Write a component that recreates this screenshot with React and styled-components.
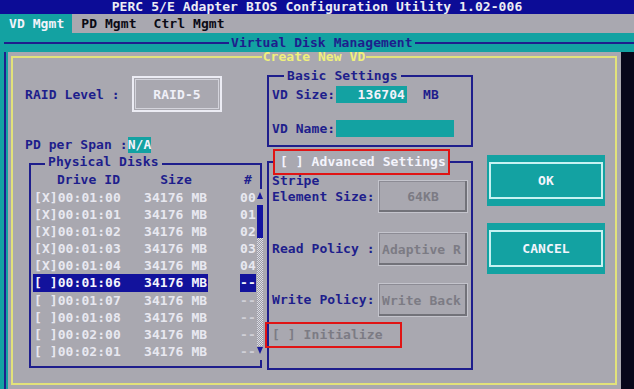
import styled, { createGlobalStyle } from "styled-components";

const GlobalStyle = createGlobalStyle`
  * {
    box-sizing: border-box;
  }
  html,
  body {
    margin: 0;
    padding: 0;
    background: #07071a;
  }
  body {
    font-family: "DejaVu Sans Mono", "Liberation Mono", monospace;
    font-weight: bold;
    font-size: 13px;
    letter-spacing: 0.07px;
  }
`;

const disks = [
  { mark: "X", id: "00:01:00", num: "00" },
  { mark: "X", id: "00:01:01", num: "01" },
  { mark: "X", id: "00:01:02", num: "02" },
  { mark: "X", id: "00:01:03", num: "03" },
  { mark: "X", id: "00:01:04", num: "04" },
  { mark: " ", id: "00:01:06", num: "--", selected: true },
  { mark: " ", id: "00:01:07", num: "--" },
  { mark: " ", id: "00:01:08", num: "--" },
  { mark: " ", id: "00:02:00", num: "--" },
  { mark: " ", id: "00:02:01", num: "--" },
];

function ScrollGlyph({ down }) {
  return (
    <svg width="6" height="7" viewBox="0 0 6 7">
      <path d={down ? "M0 0H6L3 7Z" : "M3 0L6 7H0Z"} fill="#1a1a9c" />
    </svg>
  );
}

function App() {
  return (
    <Screen>
      <GlobalStyle />
      <TitleBar>PERC 5/E Adapter BIOS Configuration Utility 1.02-006</TitleBar>
      <MenuBar>
        <Tab $active>VD Mgmt</Tab>
        <Tab>PD Mgmt</Tab>
        <Tab>Ctrl Mgmt</Tab>
      </MenuBar>

      <Workspace>
        <WindowHeader>
          <HeaderLine $width={225} />
          <WindowTitle>Virtual Disk Management</WindowTitle>
          <HeaderLine />
        </WindowHeader>

        <WindowBody>
          <Rail />
          <Dialog>
            <Frame>
              <FrameTitle>Create New VD</FrameTitle>
              <Columns>
                <LeftColumn>
                  <RaidRow>
                    <FieldLabel $width={107}>RAID Level :</FieldLabel>
                    <RaidBox>RAID-5</RaidBox>
                  </RaidRow>
                  <SpanRow>
                    PD per Span :<SpanValue>N/A</SpanValue>
                  </SpanRow>

                  <DiskGroup>
                    <GroupTitle $offset={12} $drop={4}>
                      Physical Disks
                    </GroupTitle>
                    <DiskHeader>
                      <span>Drive ID</span>
                      <span>Size</span>
                      <span />
                      <span>#</span>
                    </DiskHeader>
                    <DiskBody>
                      <DiskRows>
                        {disks.map((d) => (
                          <DiskRow key={d.id}>
                            <DiskCell $selected={d.selected} $pad={1}>
                              [{d.mark}]{d.id}
                            </DiskCell>
                            <DiskCell $selected={d.selected}>34176 MB</DiskCell>
                            <span />
                            <DiskCell $selected={d.selected} $muted={d.num === "--"}>
                              {d.num}
                            </DiskCell>
                          </DiskRow>
                        ))}
                      </DiskRows>
                      <ScrollBar>
                        <ScrollArrow>
                          <ScrollGlyph />
                        </ScrollArrow>
                        <ScrollThumb />
                        <ScrollTrack />
                        <ScrollArrow $down>
                          <ScrollGlyph down />
                        </ScrollArrow>
                      </ScrollBar>
                    </DiskBody>
                  </DiskGroup>
                </LeftColumn>

                <MiddleColumn>
                  <BasicGroup>
                    <GroupTitle $offset={12}>Basic Settings</GroupTitle>
                    <InputRow $gap={4}>
                      <FieldLabel $width={64}>VD Size:</FieldLabel>
                      <TextInput $width={71}>136704</TextInput>
                      <Unit>MB</Unit>
                    </InputRow>
                    <InputRow $gap={17}>
                      <FieldLabel $width={64}>VD Name:</FieldLabel>
                      <TextInput $width={118} />
                    </InputRow>
                  </BasicGroup>

                  <AdvancedGroup>
                    <AdvancedToggle>[ ] Advanced Settings</AdvancedToggle>
                    <SettingRow>
                      <SettingLabel>
                        <StripeLine>Stripe</StripeLine>
                        <ElementLine>Element Size:</ElementLine>
                      </SettingLabel>
                      <OptionBox $top={5} $height={33} $center>
                        64KB
                      </OptionBox>
                    </SettingRow>
                    <SettingRow $gap={19}>
                      <SettingLabel $line={34}>Read Policy :</SettingLabel>
                      <OptionBox $height={34}>Adaptive R</OptionBox>
                    </SettingRow>
                    <SettingRow $gap={17}>
                      <SettingLabel $line={34}>Write Policy:</SettingLabel>
                      <OptionBox $height={34}>Write Back</OptionBox>
                    </SettingRow>
                    <InitializeOption>[ ] Initialize</InitializeOption>
                  </AdvancedGroup>
                </MiddleColumn>

                <RightColumn>
                  <ActionButton $gap={93}>
                    <ButtonFace>OK</ButtonFace>
                  </ActionButton>
                  <ActionButton $gap={17}>
                    <ButtonFace>CANCEL</ButtonFace>
                  </ActionButton>
                </RightColumn>
              </Columns>
            </Frame>
          </Dialog>
          <Shadow />
        </WindowBody>
      </Workspace>
    </Screen>
  );
}

export default App;

const Screen = styled.div`
  width: 634px;
  height: 389px;
  display: flex;
  flex-direction: column;
  overflow: hidden;
  background: #07071a;
`;

const TitleBar = styled.div`
  flex: none;
  height: 14px;
  line-height: 14px;
  background: #0c0c96;
  color: #ececf4;
  text-align: center;
  white-space: pre;
`;

const MenuBar = styled.div`
  flex: none;
  height: 19px;
  display: flex;
  background: #a9a8b0;
`;

const Tab = styled.div`
  padding: 0 8px 0 9px;
  line-height: 19px;
  white-space: pre;
  color: ${(p) => (p.$active ? "#f2f2fa" : "#0a0a14")};
  background: ${(p) => (p.$active ? "#13a2a2" : "transparent")};
`;

const Workspace = styled.div`
  flex: 1;
  min-height: 0;
  display: flex;
  flex-direction: column;
  background: #13a2a2;
`;

const WindowHeader = styled.div`
  flex: none;
  height: 19px;
  display: flex;
  align-items: center;
  padding-left: 4px;
`;

const HeaderLine = styled.div`
  height: 2px;
  background: #1e1e8c;
  flex: ${(p) => (p.$width ? "none" : 1)};
  width: ${(p) => (p.$width ? `${p.$width}px` : "auto")};
`;

const WindowTitle = styled.div`
  padding: 0 2px;
  line-height: 19px;
  color: #1e1e8c;
  white-space: pre;
`;

const WindowBody = styled.div`
  flex: 1;
  min-height: 0;
  display: flex;
`;

const Rail = styled.div`
  flex: none;
  width: 4px;
  margin-left: 4px;
  border-left: 2px solid #1e1e8c;
`;

const Dialog = styled.div`
  flex: none;
  width: 613px;
  display: flex;
  padding: 0 4px 4px 3px;
  background: #a9a8b0;
`;

const Shadow = styled.div`
  flex: 1;
  background: #07071a;
`;

const Frame = styled.fieldset`
  flex: 1;
  min-width: 0;
  margin: 0;
  padding: 0;
  border: 2px solid #e2e27a;
`;

const FrameTitle = styled.legend`
  margin: 0 auto;
  padding: 0 1px;
  line-height: 10px;
  color: #f0f07c;
  white-space: pre;
`;

const Columns = styled.div`
  display: grid;
  grid-template-columns: 254px 206px 1fr;
  align-items: start;
`;

const LeftColumn = styled.div`
  display: flex;
  flex-direction: column;
  padding-left: 12px;
`;

const RaidRow = styled.div`
  margin-top: 14px;
  display: flex;
  align-items: center;
`;

const FieldLabel = styled.div`
  flex: none;
  width: ${(p) => p.$width}px;
  line-height: 17px;
  color: #1e1e8c;
  white-space: pre;
`;

const RaidBox = styled.div`
  width: 90px;
  height: 36px;
  display: flex;
  align-items: center;
  justify-content: center;
  border: 2px solid #ececf4;
  box-shadow: inset 0 0 0 1px #a9a8b0, inset 0 0 0 2px #d4d4dc;
  color: #f0f0f8;
`;

const SpanRow = styled.div`
  margin-top: 24px;
  line-height: 17px;
  color: #1e1e8c;
  white-space: pre;
`;

const SpanValue = styled.span`
  display: inline-block;
  line-height: 16px;
  background: #13a2a2;
  color: #f2f2fa;
`;

const DiskGroup = styled.fieldset`
  width: 233px;
  min-width: 0;
  margin: 3px 0 0 4px;
  padding: 0 0 6px 2px;
  border: 2px solid #1e1e8c;
`;

const GroupTitle = styled.legend`
  margin-left: ${(p) => p.$offset}px;
  padding: 0 3px ${(p) => p.$drop || 0}px;
  line-height: 12px;
  color: #1e1e8c;
  white-space: pre;
`;

const DiskHeader = styled.div`
  display: grid;
  grid-template-columns: 111px 64px 32px 16px;
  line-height: 16.5px;
  text-align: center;
  color: #1e1e8c;
`;

const DiskBody = styled.div`
  display: flex;
`;

const DiskRows = styled.div`
  flex: none;
  width: 224px;
`;

const DiskRow = styled.div`
  display: grid;
  grid-template-columns: 111px 64px 32px 16px;
  height: 17.2px;
  line-height: 17.2px;
  white-space: pre;
`;

const DiskCell = styled.span`
  padding-left: ${(p) => p.$pad || 0}px;
  color: ${(p) => (p.$selected ? "#f4f4fc" : p.$muted ? "#cfcfd7" : "#e8e8f0")};
  background: ${(p) => (p.$selected ? "#12129c" : "transparent")};
`;

const ScrollBar = styled.div`
  flex: none;
  width: 6px;
  margin-right: -3px;
  display: flex;
  flex-direction: column;
  background: #a9a8b0;
`;

const ScrollArrow = styled.div`
  flex: none;
  height: 14px;
  display: flex;
  justify-content: center;
  align-items: ${(p) => (p.$down ? "flex-start" : "center")};
  padding-top: ${(p) => (p.$down ? 1 : 0)}px;
`;

const ScrollThumb = styled.div`
  flex: none;
  height: 33px;
  margin-top: 2.5px;
  background: #1414a0;
`;

const ScrollTrack = styled.div`
  flex: 1;
  background: repeating-conic-gradient(#dcdce4 0 25%, #9c9ca6 0 50%) 0 0 / 2px 2px;
`;

const MiddleColumn = styled.div`
  display: flex;
  flex-direction: column;
`;

const BasicGroup = styled.fieldset`
  min-width: 0;
  margin: 8px 0 0;
  padding: 0 3px 8px;
  border: 2px solid #1e1e8c;
`;

const InputRow = styled.div`
  margin-top: ${(p) => p.$gap}px;
  height: 17px;
  display: flex;
  align-items: center;
`;

const TextInput = styled.div`
  flex: none;
  width: ${(p) => p.$width}px;
  height: 17px;
  padding-right: 2px;
  line-height: 17px;
  text-align: right;
  background: #13a2a2;
  color: #f2f2fa;
`;

const Unit = styled.span`
  margin-left: 16px;
  color: #1e1e8c;
`;

const AdvancedGroup = styled.fieldset`
  min-width: 0;
  margin: 2px 0 0;
  padding: 0 3px 20px;
  border: 2px solid #1e1e8c;
`;

const AdvancedToggle = styled.legend`
  margin-left: 1px;
  padding: 0 2px 0 5px;
  border: 2px solid #e01414;
  line-height: 22px;
  color: #f4f4fc;
  white-space: pre;
`;

const SettingRow = styled.div`
  margin-top: ${(p) => p.$gap || 0}px;
  display: flex;
  align-items: flex-start;
`;

const SettingLabel = styled.div`
  flex: none;
  width: 106px;
  line-height: ${(p) => (p.$line ? `${p.$line}px` : "normal")};
  color: #1e1e8c;
  white-space: pre;
`;

const StripeLine = styled.div`
  line-height: 11px;
`;

const ElementLine = styled.div`
  line-height: 22px;
`;

const OptionBox = styled.div`
  flex: none;
  width: 90px;
  height: ${(p) => p.$height}px;
  margin-top: ${(p) => p.$top || 0}px;
  display: flex;
  align-items: center;
  justify-content: ${(p) => (p.$center ? "center" : "flex-start")};
  padding-left: ${(p) => (p.$center ? 0 : 3)}px;
  overflow: hidden;
  white-space: pre;
  color: #7c7b84;
  border: 1px solid #c4c4cc;
  box-shadow: inset -2px -2px 0 #727279, inset 1px 1px 0 #8c8b94;
`;

const InitializeOption = styled.div`
  width: 137px;
  margin: 5px 0 0 -7px;
  padding-left: 5px;
  border: 2px solid #e01414;
  line-height: 22px;
  color: #7c7b84;
  white-space: pre;
`;

const RightColumn = styled.div`
  display: flex;
  flex-direction: column;
  padding-left: 14px;
`;

const ActionButton = styled.div`
  width: 118px;
  height: 51px;
  margin-top: ${(p) => p.$gap}px;
  padding: 7px 2px;
  background: #13a2a2;
`;

const ButtonFace = styled.div`
  height: 100%;
  display: flex;
  align-items: center;
  justify-content: center;
  border: 2px solid #c6f2f2;
  color: #f4f4fc;
`;
